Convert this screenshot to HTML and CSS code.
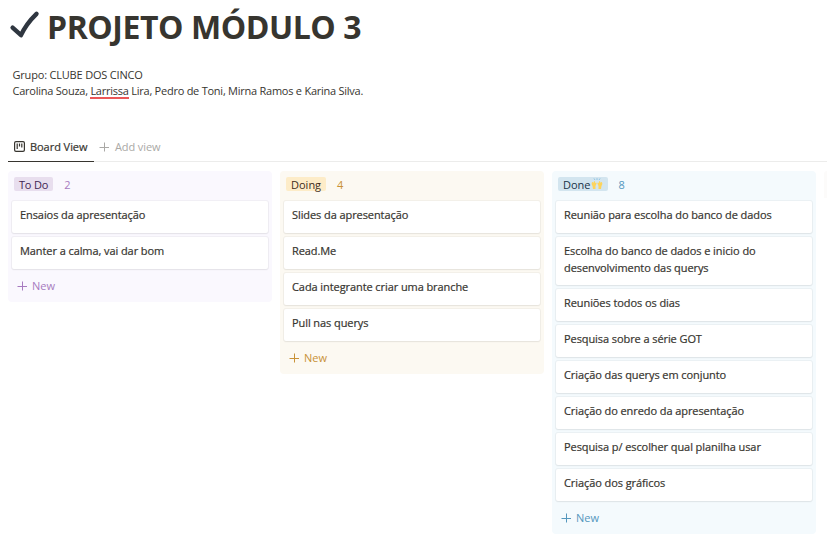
FILE: index.html
```html
<!DOCTYPE html>
<html lang="pt-BR">
<head>
<meta charset="utf-8">
<title>PROJETO MÓDULO 3</title>
<link rel="stylesheet" href="styles.css">
</head>
<body>
<svg class="defs" aria-hidden="true"><symbol id="plus" viewBox="0 0 10 10"><path d="M5.500 .5V9.500M.5 5.500H10"/></symbol></svg>
<header class="title">
  <svg class="check" viewBox="0 0 32 32"><path d="M4.600 19.700L13 27.200Q18 16 28.500 5.800" fill="none" stroke="#2f3640" stroke-width="4.400" stroke-linecap="round" stroke-linejoin="round"/></svg>
  <h1>PROJETO MÓDULO 3</h1>
</header>
<div class="intro">
  <div class="group">Grupo: CLUBE DOS CINCO</div>
  <div class="members">Carolina Souza, <span class="typo">Larrissa</span> Lira, Pedro de Toni, Mirna Ramos e Karina Silva.</div>
</div>
<nav class="tabs">
  <div class="tab active"><svg class="boardicon" viewBox="0 0 11 11"><rect x=".6" y=".6" width="9.800" height="9.800" rx="1.400"/><path d="M3.200 2.500V8M5.500 2.500V5.500M7.800 2.500V6.500"/></svg><span>Board View</span></div>
  <div class="tab add"><svg class="plus"><use href="#plus"/></svg><span>Add view</span></div>
</nav>
<main class="board">
  <section class="col purple">
    <div class="head"><span class="tag">To Do</span><span class="count">2</span></div>
    <div class="card"><span>Ensaios da apresentação</span></div>
    <div class="card"><span>Manter a calma, vai dar bom</span></div>
    <div class="new"><svg class="plus"><use href="#plus"/></svg><span>New</span></div>
  </section>
  <section class="col yellow">
    <div class="head"><span class="tag">Doing</span><span class="count">4</span></div>
    <div class="card"><span>Slides da apresentação</span></div>
    <div class="card"><span>Read.Me</span></div>
    <div class="card"><span>Cada integrante criar uma branche</span></div>
    <div class="card"><span>Pull nas querys</span></div>
    <div class="new"><svg class="plus"><use href="#plus"/></svg><span>New</span></div>
  </section>
  <section class="col blue">
    <div class="head"><span class="tag">Done<svg class="hands" viewBox="0 0 12 12"><path fill="#fdd45c" d="M1 4.200L2 4 2.500 5 3 3.200 4 3.200 4.200 5 5.200 4.500 5.600 5.500 4.500 8V11H2L1.500 8 .6 6zM11 4.200L10 4 9.500 5 9 3.200 8 3.200 7.800 5 6.800 4.500 6.400 5.500 7.500 8V11H10L10.500 8 11.400 6z"/><path d="M3 .5L3.800 1.800M6 .3V1.800M9 .5L8.200 1.800" stroke="#79b9df" stroke-width=".9"/></svg></span><span class="count">8</span></div>
    <div class="card"><span>Reunião para escolha do banco de dados</span></div>
    <div class="card two-line"><span>Escolha do banco de dados e inicio do<br>desenvolvimento das querys</span></div>
    <div class="card"><span>Reuniões todos os dias</span></div>
    <div class="card"><span>Pesquisa sobre a série GOT</span></div>
    <div class="card"><span>Criação das querys em conjunto</span></div>
    <div class="card"><span>Criação do enredo da apresentação</span></div>
    <div class="card"><span>Pesquisa p/ escolher qual planilha usar</span></div>
    <div class="card"><span>Criação dos gráficos</span></div>
    <div class="new"><svg class="plus"><use href="#plus"/></svg><span>New</span></div>
  </section>
  <section class="next"></section>
</main>
</body>
</html>
```
FILE: styles.css
```css
* { box-sizing: border-box; }
body { margin: 0; height: 550px; overflow: hidden; background: #fff; color: #37352f; font-family: "Open Sans", "Noto Sans", sans-serif; font-size: 11px; line-height: 16px; }
.defs { position: absolute; width: 0; height: 0; }
.title { display: flex; height: 58px; padding: 8px 0 0 8px; }
.check { width: 32px; height: 32px; }
h1 { margin: -1px 0 0 7px; font-size: 32px; line-height: 40px; font-weight: 700; letter-spacing: -.45px; white-space: nowrap; }
.intro { height: 75px; padding: 9px 0 0 12.5px; white-space: nowrap; }
.group { letter-spacing: -.19px; }
.members { letter-spacing: -.245px; }
.typo { display: inline-block; height: 16px; border-bottom: 2px solid #eb5757; vertical-align: top; }
.tabs { display: flex; height: 29px; margin-left: 8px; border-bottom: 1px solid #ececeb; }
.tab { display: flex; align-items: center; height: 29px; white-space: nowrap; }
.active { width: 86px; padding-left: 6px; border-bottom: 1px solid #37352f; -webkit-text-stroke: .2px; letter-spacing: -.05px; }
.boardicon { width: 11px; height: 11px; margin: -2px 5px 0 0; fill: none; stroke: #37352f; stroke-width: 1.2; }
.add { height: 27px; color: #aaa9a6; padding-left: 5px; letter-spacing: -.1px; }
.plus { width: 10px; height: 10px; margin-right: 5px; fill: none; stroke: currentColor; stroke-width: 1; }
.add .plus { margin-right: 6px; }
.board { display: flex; align-items: flex-start; gap: 8px; padding: 9px 0 0 8px; }
.col { width: 264px; flex: none; display: flex; flex-direction: column; gap: 4px; padding: 0 4px 4px; border-radius: 4px; }
.head { display: flex; height: 26px; padding: 6px 2px 0; }
.tag { display: flex; height: 14px; padding: 0 5px; border-radius: 2px; line-height: 15px; }
.purple .tag { letter-spacing: -.2px; }
.count { margin-left: 11px; line-height: 15px; }
.card { min-height: 32px; padding: 6px 8px 10px; background: #fff; border-radius: 2px; box-shadow: 0 0 0 1px rgba(15,15,15,.04), 0 1px 2px rgba(15,15,15,.06); -webkit-text-stroke: .2px; letter-spacing: -.08px; color: #37352f; white-space: nowrap; }
.two-line { height: 48px; padding: 5px 8px 9px; line-height: 17px; }
.new { display: flex; align-items: center; height: 25px; padding: 0 0 0 5px; }
.purple { background: #faf8fe; color: #a77bc0; }
.yellow { background: #fcf9f2; color: #c99237; }
.blue { background: #f4fafd; color: #5597bd; }
.purple .tag { background: #e8deee; color: #412454; }
.yellow .tag { background: #fdecc8; color: #402c1b; }
.blue .tag { background: #d3e5ef; color: #183347; }
.hands { width: 12px; height: 12px; margin-top: 1px; }
.next { flex: 1; height: 27px; background: #fcfbfa; border-radius: 4px 0 0 0; }
```
